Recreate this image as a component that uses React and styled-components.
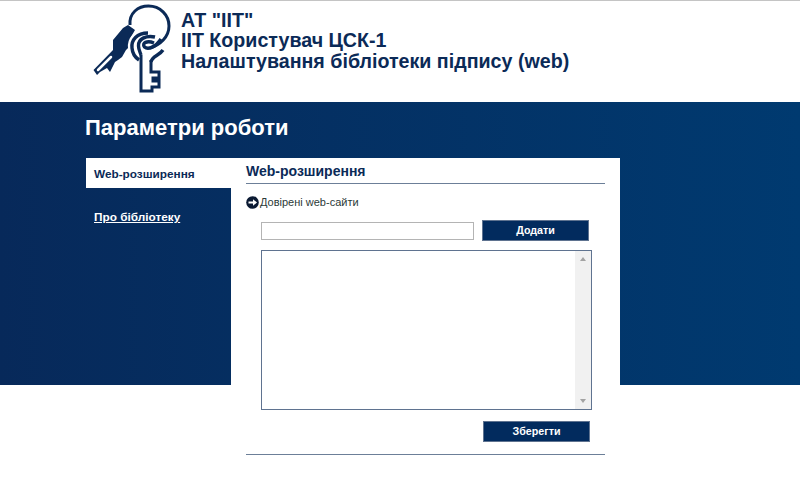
import React from "react";
import styled, { createGlobalStyle } from "styled-components";

const Global = createGlobalStyle`
  html, body { margin: 0; padding: 0; background: #fff; }
  body { font-family: "Liberation Sans", Arial, sans-serif; overflow: hidden; }
`;

const Page = styled.div`
  width: 800px;
  height: 500px;
  overflow: hidden;
  border-top: 1px solid #c4c4c4;
  box-sizing: border-box;
`;

const Header = styled.header`
  height: 101px;
  padding-left: 93px;
  display: flex;
  align-items: flex-start;
  gap: 11px;
`;

const HeaderLines = styled.div`
  padding-top: 9px;
  color: #0b2a57;
  font-size: 19.65px;
  font-weight: 700;
  line-height: 20.4px;
`;

const HeaderLine = styled.div`
  white-space: nowrap;
`;

const Band = styled.div`
  height: 283px;
  padding: 13px 0 0 85px;
  box-sizing: border-box;
  background: linear-gradient(90deg, #07295a 0%, #003a70 100%);
`;

const Title = styled.h1`
  margin: 0;
  height: 43px;
  color: #fff;
  font-size: 22px;
  line-height: 26px;
  font-weight: 700;
`;

const Columns = styled.div`
  display: flex;
  align-items: flex-start;
`;

const Sidebar = styled.nav`
  width: 145px;
  flex: none;
  margin-left: 1px;
`;

const ActiveTab = styled.div`
  height: 30px;
  background: #fff;
  color: #0b2a57;
  font-size: 11.8px;
  font-weight: 700;
  line-height: 32px;
  padding-left: 8px;
`;

const TabLink = styled.a`
  display: block;
  margin-top: 14px;
  padding-left: 8px;
  color: #fff;
  font-size: 11.8px;
  line-height: 30px;
  font-weight: 700;
  text-decoration: underline;
`;

const Panel = styled.main`
  width: 389px;
  height: 320px;
  flex: none;
  background: #fff;
  padding: 0 15px;
  box-sizing: border-box;
`;

const PanelTitle = styled.h2`
  margin: 0;
  height: 26px;
  box-sizing: border-box;
  border-bottom: 1px solid #6c7f98;
  color: #0b2a57;
  font-size: 14px;
  line-height: 26px;
  font-weight: 700;
`;

const SectionRow = styled.div`
  margin-top: 10px;
  height: 16px;
  display: flex;
  align-items: center;
  gap: 1px;
  color: #2b3a38;
  font-size: 11px;
`;

const Form = styled.div`
  padding-left: 15px;
`;

const AddRow = styled.div`
  margin-top: 10px;
  display: flex;
  align-items: center;
  gap: 8px;
`;

const UrlInput = styled.input`
  width: 213px;
  height: 18px;
  box-sizing: border-box;
  border: 1px solid #b4b4b4;
  outline: none;
  background: #fff;
  padding: 0 3px;
`;

const ActionButton = styled.button`
  width: ${(p) => p.$width}px;
  height: 21px;
  padding: 0 0 2px;
  box-sizing: border-box;
  border: 1px solid #5f7390;
  background: #022b5e;
  color: #fff;
  font-family: "Liberation Sans", Arial, sans-serif;
  font-size: 10.7px;
  font-weight: 700;
`;

const ListBox = styled.div`
  margin-top: 9px;
  width: 331px;
  height: 160px;
  box-sizing: border-box;
  border: 1px solid #5f7390;
  display: flex;
  justify-content: flex-end;
`;

const ScrollTrack = styled.div`
  width: 16px;
  background: #f1f1f1;
  display: flex;
  flex-direction: column;
  justify-content: space-between;
  align-items: center;
  padding: 6px 0;
  box-sizing: border-box;
`;

const Arrow = styled.span`
  width: 0;
  height: 0;
  border-left: 3.5px solid transparent;
  border-right: 3.5px solid transparent;
  ${(p) => (p.$down ? "border-top: 4px solid #a3a3a3;" : "border-bottom: 4px solid #a3a3a3;")}
`;

const SaveRow = styled.div`
  margin-top: 11px;
  width: 329px;
  display: flex;
  justify-content: flex-end;
`;

const BottomRule = styled.hr`
  margin: 12px 0 0;
  border: 0;
  border-top: 1px solid #6c7f98;
`;

const KeysLogo = () => (
  <svg width="78" height="95" viewBox="93 1 78 95" style={{ flex: "none", marginRight: "-1px" }}>
    <g fill="none" stroke="#0b2a57" strokeWidth="3">
      <path d="M130 25 C129 13 138 6 148.5 6 C160 6 169 15 169 26 C169 37 160 45 150 48" />
    </g>
    <path
      fill="#0b2a57"
      d="M93.5 70 L113 50 L113 40 L123 28 L128 25 L135 30 L131 37 L129 47 L126 50 L122 57 L118 60 L115 62 L110 72 L107 68 L100 72 L97 75 Z"
    />
    <path d="M98 70 L111 57" stroke="#fff" strokeWidth="2.5" strokeLinecap="round" fill="none" />
    <g fill="none" stroke="#0b2a57" strokeWidth="3.4">
      <path stroke="#fff" strokeWidth="8" d="M147 33 C137 33 131 40 132 48 C132.5 54 136 58 139 60" />
      <path d="M148 33 C137 33 131 40 132 48 C132.5 54 136 58 139 60" />
      <path d="M155 37 C146 35 138 39 138.5 46 C138.5 49 140 52 141 55" />
      <path d="M161 39 C156 47 148 50 144.5 47 C141.5 43 147 40 154 43" />
      <path d="M163 50 C159 56 152 56 151 62" />
      <path
        strokeWidth="3"
        d="M141 55 L141 91 L152 91 L152 87 L159 87 L159 81 L153 81 L153 78 L159 78 L159 72 L151 72 L151 60"
      />
    </g>
  </svg>
);

const ArrowIcon = () => (
  <svg width="13" height="13" viewBox="0 0 13 13">
    <circle cx="6.5" cy="6.5" r="6.3" fill="#0b1a33" />
    <path d="M2.5 5.5H7V3.2L11 6.5 7 9.8V7.5H2.5Z" fill="#fff" />
  </svg>
);

export default function App() {
  return (
    <Page>
      <Global />
      <Header>
        <KeysLogo />
        <HeaderLines>
          <HeaderLine>АТ "ІІТ"</HeaderLine>
          <HeaderLine>ІІТ Користувач ЦСК-1</HeaderLine>
          <HeaderLine>Налаштування бібліотеки підпису (web)</HeaderLine>
        </HeaderLines>
      </Header>
      <Band>
        <Title>Параметри роботи</Title>
        <Columns>
          <Sidebar>
            <ActiveTab>Web-розширення</ActiveTab>
            <TabLink>Про бібліотеку</TabLink>
          </Sidebar>
          <Panel>
            <PanelTitle>Web-розширення</PanelTitle>
            <SectionRow>
              <ArrowIcon />
              Довірені web-сайти
            </SectionRow>
            <Form>
              <AddRow>
                <UrlInput />
                <ActionButton $width={107}>Додати</ActionButton>
              </AddRow>
              <ListBox>
                <ScrollTrack>
                  <Arrow />
                  <Arrow $down />
                </ScrollTrack>
              </ListBox>
              <SaveRow>
                <ActionButton $width={107}>Зберегти</ActionButton>
              </SaveRow>
            </Form>
            <BottomRule />
          </Panel>
        </Columns>
      </Band>
    </Page>
  );
}
